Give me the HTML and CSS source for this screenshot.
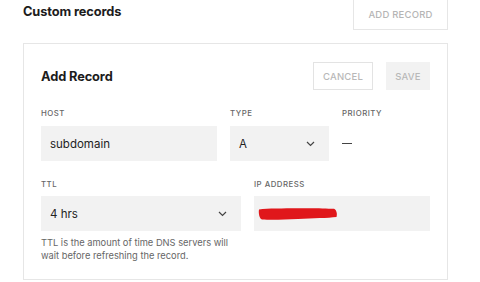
FILE: index.html
```html
<!DOCTYPE html>
<html lang="en">
  <head>
    <meta charset="UTF-8" />
    <title>Custom records</title>
    <link rel="stylesheet" href="styles.css">
  </head>
  <body>
    <div class="records">
      <div class="records-head">
        <h2>Custom records</h2>
        <button class="btn-add">ADD RECORD</button>
      </div>

      <div class="record-card">
        <div class="card-head">
          <h3>Add Record</h3>
          <div class="card-actions">
            <button class="btn-cancel">CANCEL</button>
            <button class="btn-save">SAVE</button>
          </div>
        </div>

        <div class="row row-top">
          <div class="field">
            <label>HOST</label>
            <div class="input">subdomain</div>
          </div>
          <div class="field">
            <label>TYPE</label>
            <div class="input select">
              <span>A</span>
              <svg class="chevron" width="9" height="6" viewBox="0 0 9 6"><path d="M1 1l3.5 3.5L8 1" fill="none" stroke="#444" stroke-width="1.2"/></svg>
            </div>
          </div>
          <div class="field">
            <label>PRIORITY</label>
            <div class="priority"><span class="dash"></span></div>
          </div>
        </div>

        <div class="row row-bottom">
          <div class="field">
            <label>TTL</label>
            <div class="input select">
              <span>4 hrs</span>
              <svg class="chevron" width="9" height="6" viewBox="0 0 9 6"><path d="M1 1l3.5 3.5L8 1" fill="none" stroke="#444" stroke-width="1.2"/></svg>
            </div>
            <p class="help">TTL is the amount of time DNS servers will wait before refreshing the record.</p>
          </div>
          <div class="field">
            <label>IP ADDRESS</label>
            <div class="input ip">
              <svg class="redact" width="80" height="14" viewBox="0 0 80 14"><path d="M1 2.5C10 1 25 1.5 40 1.2 55 1 68 1.3 76 1.8 78.5 3 79.5 7 78.5 10 70 11 55 11.3 40 12 25 12.8 12 13 4 12.5 1.5 12 0.3 6 1 2.5Z" fill="#e0171b"/></svg>
            </div>
          </div>
        </div>
      </div>
    </div>
  </body>
</html>
```

FILE: styles.css
```css
body {
  margin: 0;
  background: #fff;
  font-family: "Inter", "Liberation Sans", sans-serif;
  color: #1c1c1c;
}

.records {
  width: 425px;
  margin-left: 23px;
}

.records-head {
  display: flex;
  justify-content: space-between;
  align-items: flex-start;
  height: 31px;
}

.records-head h2 {
  margin: 4px 0 0;
  font-size: 12.8px;
  font-weight: 700;
  line-height: 16px;
  letter-spacing: -0.1px;
}

.btn-add {
  width: 95px;
  height: 31px;
  margin-top: -1px;
  background: #fff;
  border: 1px solid #e6e6e6;
  color: #b5b5b5;
  font-family: inherit;
  font-size: 9.5px;
  font-weight: 500;
  letter-spacing: 0.2px;
  padding: 0;
}

.record-card {
  margin-top: 12px;
  border: 1px solid #e6e6e6;
  padding: 18px 17px 17px 17px;
}

.card-head {
  display: flex;
  justify-content: space-between;
  align-items: center;
  height: 28px;
  margin-bottom: 17px;
}

.card-head h3 {
  margin: 0;
  font-size: 12.8px;
  font-weight: 700;
  letter-spacing: -0.1px;
}

.card-actions {
  display: flex;
  gap: 13px;
}

.card-actions button {
  height: 28px;
  font-family: inherit;
  font-size: 9.5px;
  font-weight: 500;
  letter-spacing: 0.2px;
  color: #b8b8b8;
  padding: 0;
}

.btn-cancel {
  width: 60px;
  background: #fff;
  border: 1px solid #e3e3e3;
}

.btn-save {
  width: 44px;
  background: #f2f2f2;
  border: none;
}

.row {
  display: grid;
  column-gap: 13px;
}

.row-top {
  grid-template-columns: 176px 99px 1fr;
  margin-bottom: 17px;
}

.row-bottom {
  grid-template-columns: 200px 1fr;
}

.field label {
  display: block;
  font-size: 7.8px;
  line-height: 12px;
  font-weight: 500;
  letter-spacing: 0.5px;
  color: #666;
  margin-bottom: 7px;
}

.row-bottom .field label {
  margin-bottom: 6px;
}

.input {
  display: flex;
  align-items: center;
  height: 35px;
  background: #f2f2f2;
  padding: 0 9px;
  font-size: 11.5px;
  color: #222;
  box-sizing: border-box;
}

.select {
  justify-content: space-between;
  padding-right: 14px;
}

.chevron {
  display: block;
}

.priority {
  display: flex;
  align-items: center;
  height: 35px;
}

.dash {
  display: block;
  width: 10px;
  height: 1px;
  background: #444;
  margin-top: -1px;
}

.ip {
  padding-left: 4px;
}

.redact {
  display: block;
  margin-top: 1px;
}

.help {
  margin: 5px 0 0;
  font-size: 9.3px;
  line-height: 13px;
  color: #666;
}
```
